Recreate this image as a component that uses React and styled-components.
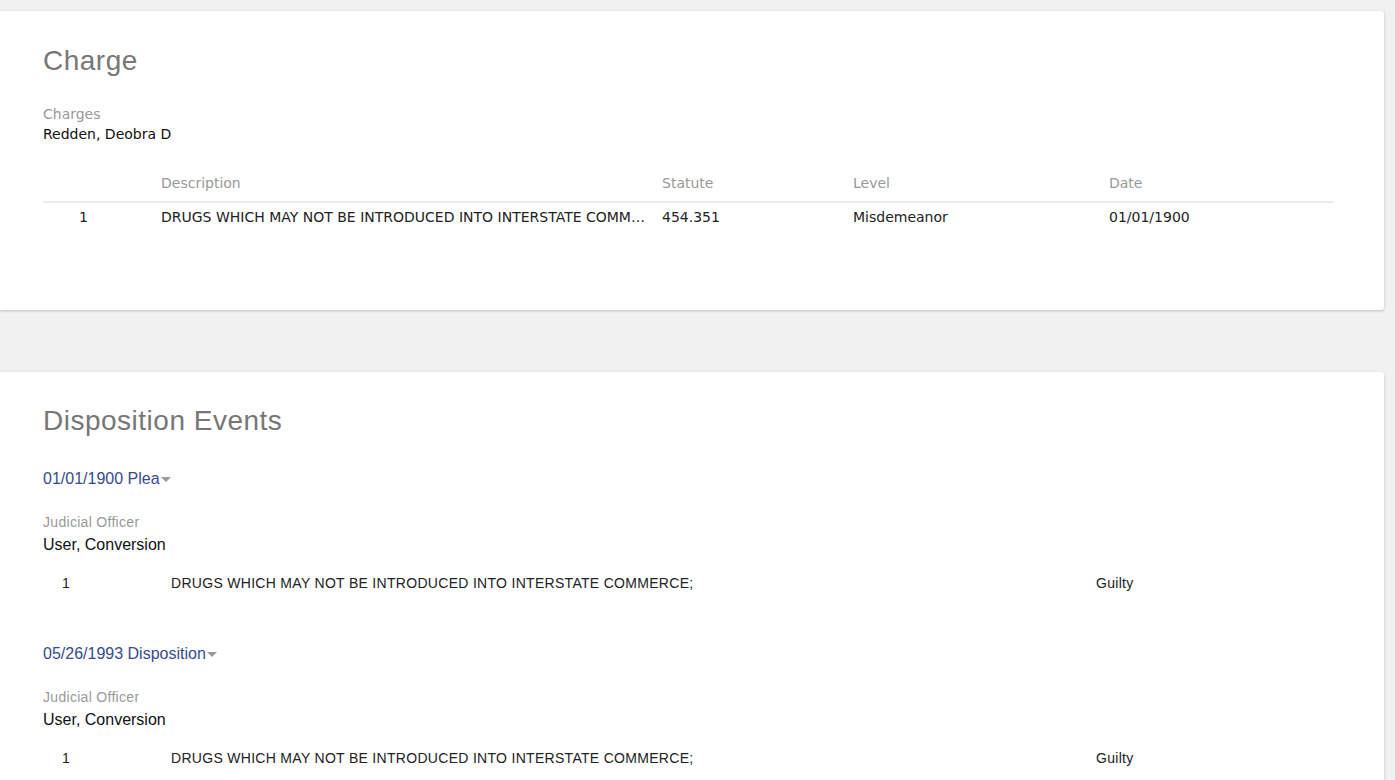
import React from "react";
import styled, { createGlobalStyle } from "styled-components";

const GlobalStyle = createGlobalStyle`
  html, body {
    margin: 0;
    padding: 0;
    background: #f1f1f1;
  }
  body {
    font-family: "Liberation Sans", Arial, sans-serif;
    color: #222;
  }
`;

const charges = [
  {
    seq: 1,
    description: "DRUGS WHICH MAY NOT BE INTRODUCED INTO INTERSTATE COMMERCE;",
    statute: "454.351",
    level: "Misdemeanor",
    date: "01/01/1900",
  },
];

const events = [
  {
    title: "01/01/1900 Plea",
    officer: "User, Conversion",
    rows: [
      {
        seq: 1,
        description: "DRUGS WHICH MAY NOT BE INTRODUCED INTO INTERSTATE COMMERCE;",
        result: "Guilty",
      },
    ],
  },
  {
    title: "05/26/1993 Disposition",
    officer: "User, Conversion",
    rows: [
      {
        seq: 1,
        description: "DRUGS WHICH MAY NOT BE INTRODUCED INTO INTERSTATE COMMERCE;",
        result: "Guilty",
      },
    ],
  },
];

const App = () => {
  return (
    <>
      <GlobalStyle />
      <Page>
        <Card pad="35px 50px 79px 43px">
          <Title>Charge</Title>
          <FieldLabel tahoma>Charges</FieldLabel>
          <FieldValue>Redden, Deobra D</FieldValue>
          <ChargeTable>
            <thead>
              <tr>
                <HeadCell width={118} />
                <HeadCell width={501}>Description</HeadCell>
                <HeadCell width={191}>Statute</HeadCell>
                <HeadCell width={256}>Level</HeadCell>
                <HeadCell>Date</HeadCell>
              </tr>
            </thead>
            <tbody>
              {charges.map((c) => (
                <tr key={c.seq}>
                  <SeqCell>{c.seq}</SeqCell>
                  <DescCell>
                    <Ellipsis>{c.description}</Ellipsis>
                  </DescCell>
                  <BodyCell>{c.statute}</BodyCell>
                  <BodyCell>{c.level}</BodyCell>
                  <BodyCell>{c.date}</BodyCell>
                </tr>
              ))}
            </tbody>
          </ChargeTable>
        </Card>

        <Card pad="34px 50px 40px 43px">
          <Title>Disposition Events</Title>
          {events.map((ev, i) => (
            <Event key={i}>
              <EventLink href="#">
                {ev.title}
                <Caret />
              </EventLink>
              <FieldLabel>Judicial Officer</FieldLabel>
              <OfficerValue>{ev.officer}</OfficerValue>
              {ev.rows.map((r) => (
                <EventRow key={r.seq}>
                  <EventSeq>{r.seq}</EventSeq>
                  <EventDesc>{r.description}</EventDesc>
                  <EventResult>{r.result}</EventResult>
                </EventRow>
              ))}
            </Event>
          ))}
        </Card>
      </Page>
    </>
  );
};

export default App;

const tahomaStack = `"DejaVu Sans", Verdana, Tahoma, sans-serif`;

const Page = styled.div`
  padding: 11px 11px 0 0;
  display: flex;
  flex-direction: column;
  gap: 62px;
`;

const Card = styled.section`
  background: #fff;
  border-radius: 0 3px 3px 0;
  box-shadow: 0 1px 3px rgba(0, 0, 0, 0.22);
  padding: ${(p) => p.pad};
`;

const Title = styled.h2`
  margin: 0;
  font-family: "Liberation Sans", Arial, sans-serif;
  font-weight: normal;
  font-size: 28px;
  letter-spacing: 0.5px;
  line-height: 30px;
  color: #777;
`;

const FieldLabel = styled.div`
  font-family: ${(p) =>
    p.tahoma ? tahomaStack : `"Liberation Sans", Arial, sans-serif`};
  font-size: 14px;
  letter-spacing: ${(p) => (p.tahoma ? "0" : "0.3px")};
  line-height: 20px;
  color: #999;
  margin-top: ${(p) => (p.tahoma ? "28px" : "23px")};
`;

const FieldValue = styled.div`
  font-family: ${tahomaStack};
  font-size: 14px;
  line-height: 20px;
  color: #111;
`;

const ChargeTable = styled.table`
  width: 1291px;
  margin-top: 21px;
  border-collapse: collapse;
  table-layout: fixed;
  font-family: ${tahomaStack};
  font-size: 14px;
`;

const HeadCell = styled.th`
  width: ${(p) => (p.width ? `${p.width}px` : "auto")};
  text-align: left;
  font-weight: normal;
  color: #999;
  line-height: 20px;
  padding: 8px 0;
  border-bottom: 2px solid #ebebeb;
`;

const BodyCell = styled.td`
  color: #222;
  line-height: 20px;
  padding: 4px 0;
  white-space: nowrap;
`;

const SeqCell = styled(BodyCell)`
  padding-left: 36px;
`;

const DescCell = styled(BodyCell)`
  padding-right: 16px;
`;

const Ellipsis = styled.div`
  overflow: hidden;
  text-overflow: ellipsis;
  white-space: nowrap;
`;

const Event = styled.div`
  margin-top: 33px;

  & + & {
    margin-top: 51px;
  }
`;

const EventLink = styled.a`
  display: inline-flex;
  align-items: center;
  font-size: 16px;
  line-height: 20px;
  color: #374a8c;
  text-decoration: none;
`;

const Caret = styled.span`
  display: inline-block;
  width: 0;
  height: 0;
  margin-left: 1px;
  margin-top: 1px;
  border-left: 5px solid transparent;
  border-right: 5px solid transparent;
  border-top: 5px solid #999;
`;

const OfficerValue = styled.div`
  margin-top: 3px;
  font-size: 16px;
  line-height: 20px;
  color: #111;
`;

const EventRow = styled.div`
  display: grid;
  grid-template-columns: 128px 925px 1fr;
  margin-top: 18px;
  font-size: 14px;
  letter-spacing: 0.3px;
  line-height: 20px;
  color: #222;
`;

const EventSeq = styled.div`
  padding-left: 19px;
`;

const EventDesc = styled.div`
  white-space: nowrap;
`;

const EventResult = styled.div``;
